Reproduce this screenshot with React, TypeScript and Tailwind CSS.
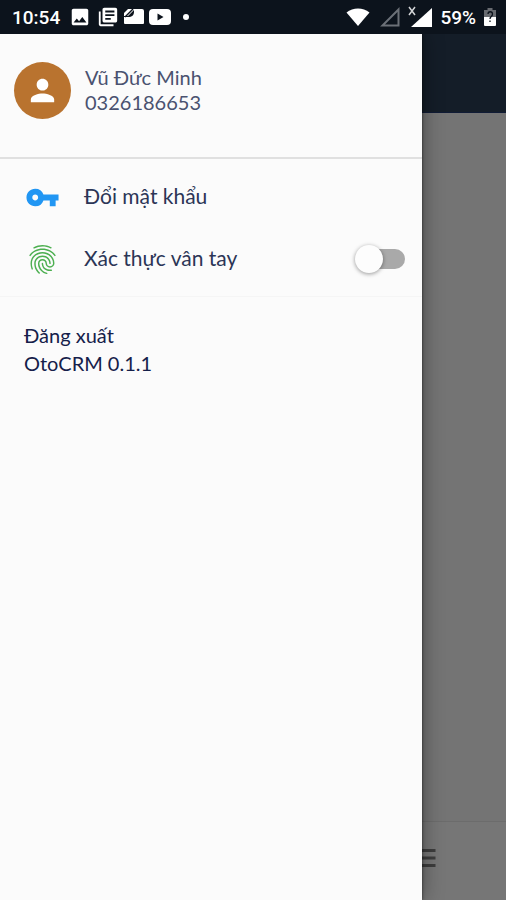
import React, { useState } from 'react';
import { MdFingerprint, MdImage, MdLibraryBooks, MdMenu, MdPerson, MdVpnKey } from 'react-icons/md';

const StatusBar = () => (
  <header className="flex h-[34px] items-center justify-between bg-[#0c131c] pl-3 pr-2.5 text-white">
    <div className="flex items-center">
      <span className="w-[57px] pt-0.5 font-['Roboto',sans-serif] text-[19px] font-medium">10:54</span>
      <MdImage size={22} />
      <MdLibraryBooks size={22} className="ml-1.5" />
      {/* Cast / file notification */}
      <svg className="ml-1 h-[18px] w-[22px]" viewBox="0 0 22 18">
        <path d="M5 1h14a2 2 0 0 1 2 2v12a1 1 0 0 1-1 1H2a1 1 0 0 1-1-1V9h4c4 0 6-2 6-5V2L5 8H1V5Z" fill="#fff" />
        <path d="m2 9 8-8" stroke="#0c131c" strokeWidth="1.5" />
      </svg>
      <svg className="ml-1 h-4 w-[22px]" viewBox="0 0 22 16">
        <rect width="22" height="16" rx="4" fill="#fff" />
        <path d="m8.500 4.500 6 3.500-6 3.500Z" fill="#0c131c" />
      </svg>
      <span className="ml-3 size-1.5 rounded-full bg-white" />
    </div>
    <div className="flex items-center">
      <svg className="h-[18px] w-6" viewBox="0 0 24 18">
        <path d="M12 18 0.5 4.5C7-1 17-1 23.5 4.5Z" fill="#fff" />
      </svg>
      <svg className="ml-2.5 h-5 w-5" viewBox="0 0 20 20">
        <path d="M18.5 2.5v16h-16Z" fill="none" stroke="#6b7077" strokeWidth="2" />
      </svg>
      <svg className="ml-2 h-[22px] w-6" viewBox="0 0 24 22">
        <path d="M24 2v19H3Z" fill="#fff" />
        <path d="m1 1 6 8M7 1 1 9" stroke="#0c131c" strokeWidth="4" />
        <path d="m1 1 6 8M7 1 1 9" stroke="#d3d5d7" strokeWidth="1.5" />
      </svg>
      <span className="ml-2 pt-0.5 font-['Roboto',sans-serif] text-[19px] font-medium">59%</span>
      <svg className="ml-2 h-[18px] w-3" viewBox="0 0 12 18">
        <path d="M3.5 0h5v2H12v7H0V2h3.5Z" fill="#686b70" />
        <path d="M0 9h12v8a1 1 0 0 1-1 1H1a1 1 0 0 1-1-1Z" fill="#fff" />
        <path d="M4 6c0-3 4.500-3 4.500 0S6 8 6 11M6 12.500V14" fill="none" stroke="#0c131c" strokeWidth="1.300" />
      </svg>
    </div>
  </header>
);

// The screen behind the open drawer, already dimmed
const DimmedScreen = () => (
  <div className="col-start-1 row-start-1 flex flex-col bg-[#747474]">
    <div className="h-[79px] border-b border-[#101b35] bg-[#141d28]" />
    <div className="flex-1" />
    <nav className="grid h-[79px] grid-cols-3 border-t border-[#6c6c6c] bg-[#767676]">
      <button type="button" aria-label="Menu" className="col-start-3 flex items-center justify-center pb-1.5 text-[#3d3d3d]">
        <MdMenu size={36} />
      </button>
    </nav>
  </div>
);

const Drawer = () => {
  const [fingerprint, setFingerprint] = useState(false);

  return (
    <aside className="z-10 col-start-1 row-start-1 w-5/6 bg-[#fbfbfb] text-[#2b3556] shadow-[0_0_20px_rgba(0,0,0,0.4),0_0_3px_rgba(0,0,0,0.6)]">
      {/* Profile */}
      <div className="flex h-[125px] gap-3.5 border-b-2 border-[#e0e0e0] pl-3.5 pt-7">
        <div className="flex size-[57px] items-center justify-center rounded-full bg-[#b9732f] text-white">
          <MdPerson size={35} />
        </div>
        <div className="pt-[3px] text-xl leading-[25px] text-[#4a5270]">
          <p>Vũ Đức Minh</p>
          <p>0326186653</p>
        </div>
      </div>

      {/* Settings */}
      <div className="border-b border-[#f5f5f5] pb-1.5 pt-[7px] text-[21px]">
        <button type="button" className="flex h-[62px] w-full items-center gap-6 pl-[25px] text-left">
          <MdVpnKey size={35} className="text-[#2196f3]" />
          <span className="pb-0.5">Đổi mật khẩu</span>
        </button>
        <label className="flex h-[62px] items-center pl-[25px] pr-[17px]">
          <MdFingerprint size={35} className="text-[#4caf50]" />
          <span className="ml-6 flex-1 pb-0.5">Xác thực vân tay</span>
          <input
            type="checkbox"
            role="switch"
            checked={fingerprint}
            onChange={(e) => setFingerprint(e.target.checked)}
            className="flex h-5 w-[50px] appearance-none items-center rounded-full bg-[#a9a9a9] bg-clip-content pl-1.5 before:-ml-1.5 before:size-7 before:shrink-0 before:rounded-full before:bg-[#fdfdfd] before:shadow-[0_1px_4px_rgba(0,0,0,0.4)] checked:bg-[#8fbfe8] checked:before:ml-4"
          />
        </label>
      </div>

      {/* Account */}
      <div className="flex flex-col items-start pl-6 pt-6 text-xl leading-7 text-[#15204a]">
        <button type="button">Đăng xuất</button>
        <p>OtoCRM 0.1.1</p>
      </div>
    </aside>
  );
};

export default function App() {
  return (
    <div className="flex min-h-screen flex-col font-['Lato','Noto_Sans',sans-serif]">
      <StatusBar />
      <main className="grid flex-1 overflow-hidden">
        <DimmedScreen />
        <Drawer />
      </main>
    </div>
  );
}
